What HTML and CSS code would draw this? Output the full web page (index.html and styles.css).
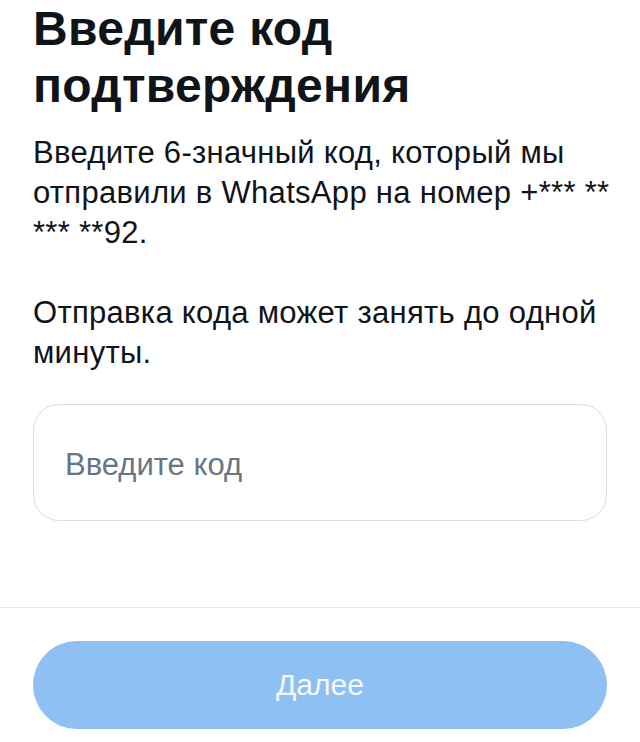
FILE: index.html
```html
<!DOCTYPE html>
<html lang="ru">
<head>
  <meta charset="UTF-8">
  <meta name="viewport" content="width=device-width, initial-scale=1.0">
  <title>Введите код подтверждения</title>
  <link rel="stylesheet" href="styles.css">
</head>
<body>
  <main class="content">
    <h1>Введите код подтверждения</h1>
    <p class="text">Введите 6-значный код, который мы отправили в WhatsApp на номер +*** ** *** **92.</p>
    <p class="text">Отправка кода может занять до одной минуты.</p>

    <div class="code-field">
      <input type="text" placeholder="Введите код">
    </div>
  </main>

  <footer class="bottom">
    <button class="next" disabled>Далее</button>
  </footer>
</body>
</html>
```

FILE: styles.css
```css
body {
  margin: 0;
  padding: 0;
  background-color: #fff;
  font-family: "Liberation Sans", Arial, sans-serif;
  color: #0f1419;
}

.content {
  padding: 0 33px;
  height: 607px;
}

h1 {
  margin: 0;
  font-family: "Liberation Sans", Arial, sans-serif;
  font-size: 48px;
  font-weight: bold;
  line-height: 57px;
  letter-spacing: 0.3px;
}

.text {
  margin: 19px -16px 0 0;
  font-size: 31px;
  line-height: 40px;
  letter-spacing: 0.3px;
}

.text + .text {
  margin-top: 40px;
}

.code-field {
  margin-top: 31px;
  height: 115px;
  border: 1px solid #dcdcdc;
  border-radius: 26px;
  display: flex;
  align-items: center;
}

.code-field input {
  border: none;
  outline: none;
  background: transparent;
  width: 100%;
  padding: 4px 31px 0;
  font-family: "Liberation Sans", Arial, sans-serif;
  font-size: 31px;
  color: #0f1419;
}

.code-field input::placeholder {
  color: #687684;
}

.bottom {
  border-top: 1px solid #e8e8e8;
  padding: 33px 33px 0;
}

.next {
  width: 100%;
  height: 88px;
  border: none;
  border-radius: 44px;
  background-color: #8ec0f3;
  color: #f4f9ff;
  font-family: "Liberation Sans", Arial, sans-serif;
  font-size: 30px;
}
```
